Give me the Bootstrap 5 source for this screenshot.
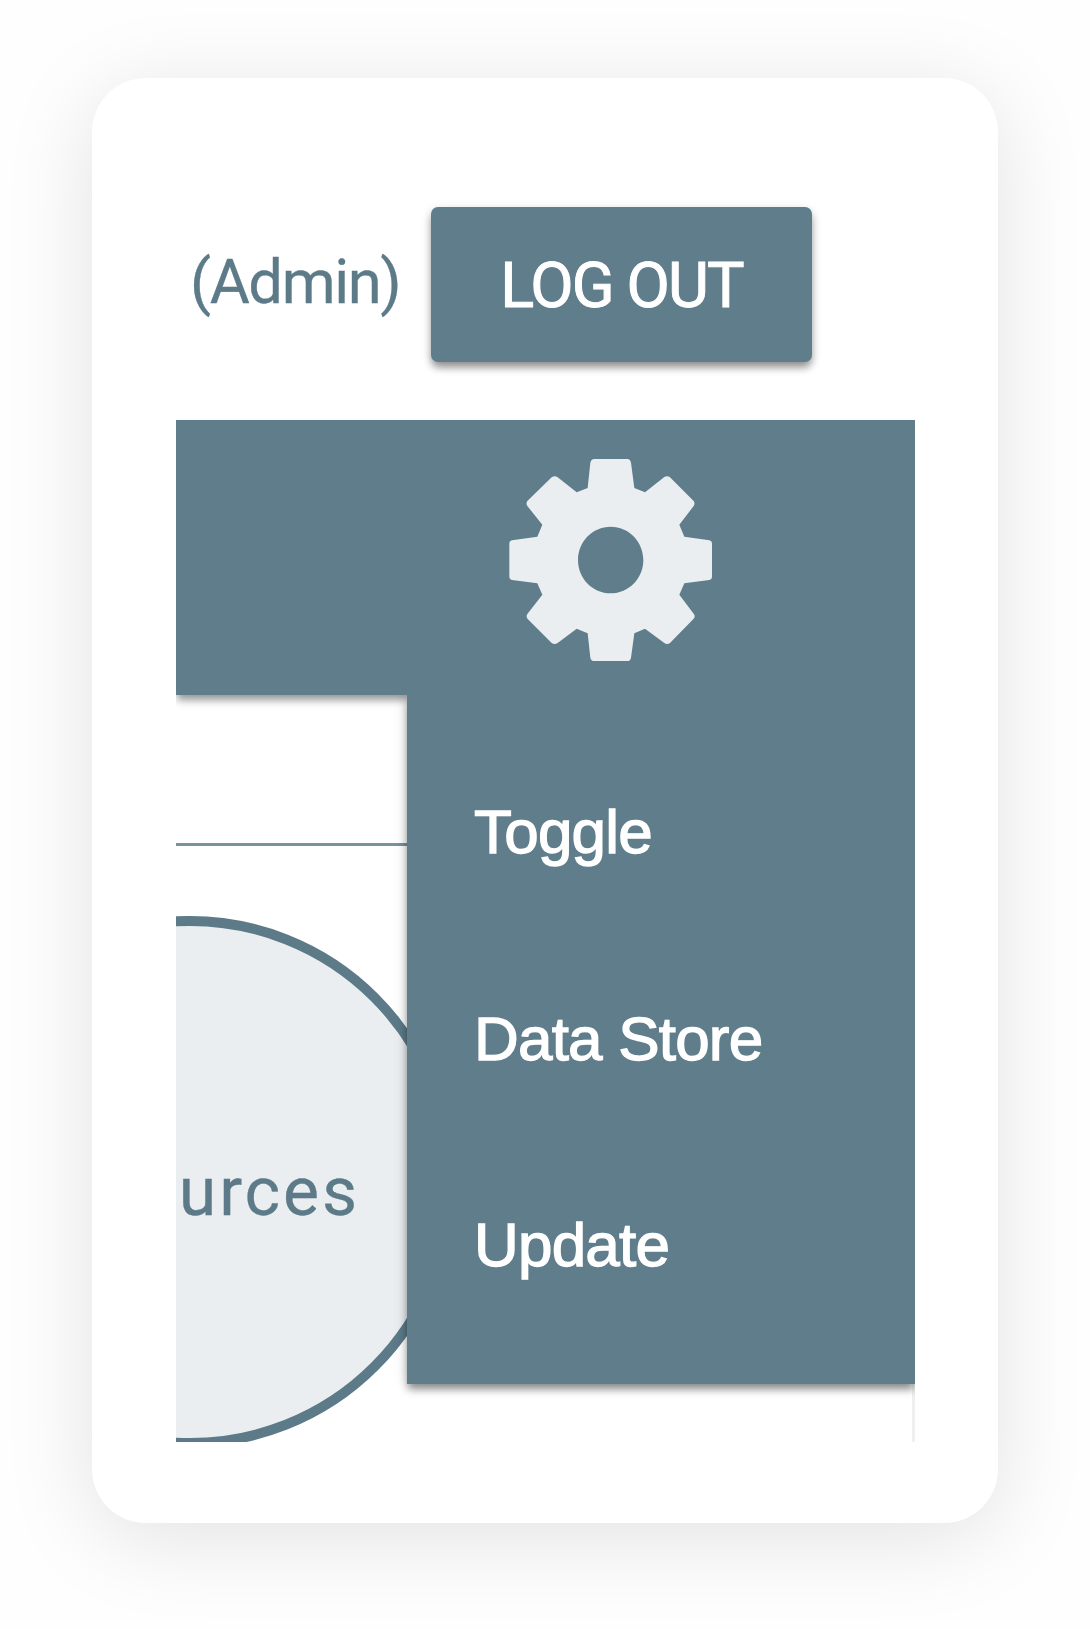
<!DOCTYPE html>
<html lang="en">
<head>
<meta charset="utf-8">
<meta name="viewport" content="width=device-width, initial-scale=1">
<title>Admin menu</title>
<link href="https://cdn.jsdelivr.net/npm/bootstrap@5.3.0/dist/css/bootstrap.min.css" rel="stylesheet">
<style>
  :root { --slate: #607d8b; --slate-edge: #5c7a88; --mist: #eaeef1; }
  body { font-family: Roboto, "Liberation Sans", sans-serif; background: #fefefe; height: 1629px; overflow: hidden; padding: 78px 92px 0; }
  .panel-card { height: 1445px; padding: 0 83px 81px 84px; border-radius: 54px; background: #fff; box-shadow: 0 15px 90px rgba(0,0,0,.115); }
  .account-bar { height: 342px; padding: 129px 0 58px 14px; }
  .user-role { font-size: 61.5px; line-height: 151px; width: 241px; letter-spacing: -1.4px; color: var(--slate-edge); white-space: nowrap; -webkit-text-stroke: .3px var(--slate-edge); }
  .btn-logout { width: 381px; height: 155px; padding: 2px 0 0; border: 0; border-radius: 7px; background: var(--slate); color: #fff; font-size: 63px; line-height: 153px; letter-spacing: -1.9px; box-shadow: 0 6px 8px -1px rgba(0,0,0,.42), 0 2px 12px rgba(0,0,0,.1); white-space: nowrap; -webkit-text-stroke: 1px #fff; }
  .tool-bar { height: 275px; background: var(--slate); box-shadow: 0 6px 8px -1px rgba(0,0,0,.42); z-index: 2; }
  .gear { width: 240px; height: 240px; margin: 20px 0 0 314px; }
  .stage { height: 747px; }
  .stage-rule { height: 3px; margin-top: 148px; background: #7892a0; }
  .node { left: -252px; top: 221px; width: 532px; height: 532px; border: 10px solid var(--slate-edge); background: var(--mist); }
  .node-label { font-size: 68px; line-height: 76px; letter-spacing: 2.9px; margin: 19px 86px 0 0; color: var(--slate-edge); -webkit-text-stroke: .3px var(--slate-edge); }
  .settings-menu { left: 230.5px; top: 0; right: 0; height: 689px; padding: 34px 0 0 67.5px; background: var(--slate); box-shadow: 0 6px 8px -1px rgba(0,0,0,.42), 0 0 14px rgba(0,0,0,.15); font-family: "Liberation Sans", Arial, sans-serif; z-index: 3; }
  .settings-menu a { display: block; height: 206.5px; line-height: 206.5px; font-size: 62px; letter-spacing: -.8px; color: #fff; text-decoration: none; white-space: nowrap; -webkit-text-stroke: 1.3px #fff; }
  .stage-edge { right: 0; top: 0; bottom: 0; width: 3px; background: #efefef; }
</style>
<script src="https://cdn.jsdelivr.net/npm/bootstrap@5.3.0/dist/js/bootstrap.bundle.min.js"></script>
</head>
<body>
<main class="panel-card">
  <div class="d-flex flex-column h-100 overflow-hidden">
    <header class="account-bar d-flex flex-shrink-0">
      <span class="user-role flex-shrink-0">(Admin)</span>
      <button type="button" class="btn btn-logout flex-shrink-0">LOG OUT</button>
    </header>
    <nav class="tool-bar position-relative flex-shrink-0">
      <svg class="gear d-block" viewBox="0 0 720 720" role="img" aria-label="Settings">
        <path fill="#eaeef1" fill-rule="evenodd" d="M313 57H412Q421 58 423 68L433 144L465 157L522 112Q531 105 540 112L611 183Q616 190 611 198L568 254L583 290L658 301Q666 303 666 310V411Q666 418 658 420L583 430L568 464L611 521Q617 529 611 536L540 609Q531 615 522 608L465 566L433 580L423 653Q421 663 412 663H313Q303 663 301 653L293 580L260 566L204 608Q194 615 185 609L113 537Q107 530 112 522L157 464L142 430L66 420Q58 418 58 411V310Q58 303 66 301L142 290L157 254L112 198Q107 191 112 183L185 112Q194 105 203 112L260 157L293 144L301 68Q303 58 313 57ZM362 260C307 260 264 305 264 360S307 460 362 460S460 415 460 360S417 260 362 260Z"/>
      </svg>
    </nav>
    <section class="stage position-relative overflow-hidden flex-shrink-0 d-flex flex-column">
      <div class="stage-rule flex-shrink-0"></div>
      <div class="node position-absolute rounded-circle d-flex align-items-center justify-content-end">
        <span class="node-label">urces</span>
      </div>
      <div class="stage-edge position-absolute"></div>
      <div class="settings-menu position-absolute">
        <a href="#">Toggle</a>
        <a href="#">Data Store</a>
        <a href="#">Update</a>
      </div>
    </section>
  </div>
</main>
</body>
</html>
